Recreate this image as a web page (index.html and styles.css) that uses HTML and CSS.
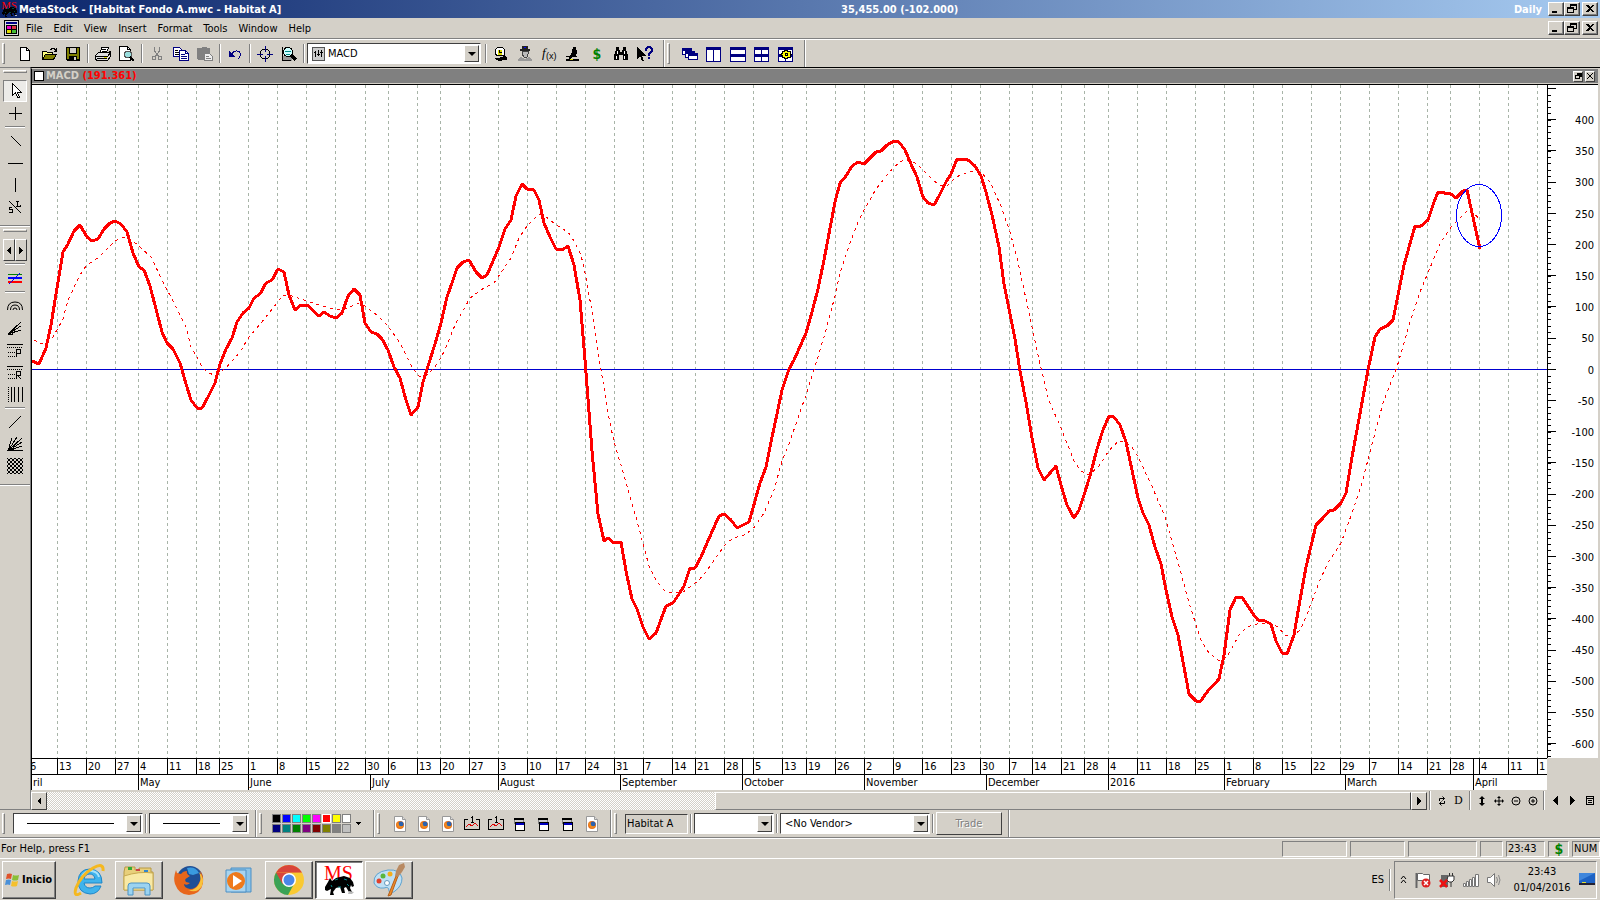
FILE: index.html
```html
<!DOCTYPE html>
<html lang="en">
<head>
  <meta charset="utf-8">
  <meta name="viewport" content="width=device-width, initial-scale=1">
  <title>MetaStock - [Habitat Fondo A.mwc - Habitat A]</title>
  <link rel="stylesheet" href="styles.css">
</head>
<body>

<!-- shared icons -->
<svg class="sprite" width="0" height="0">
  <symbol id="i-bull" viewBox="0 -4 32 34">
    <text x="1" y="13" class="ms-text">MS</text>
    <path d="M2 20l3-5 2-4 2 3 4-3 8-2 6 2 3 4 1 4-2 1-1-2-1 3 2 4h-3l-3-5-2 1 1 5h-3l-2-6-4 1-3 4 1 3h-4l1-6-4 2-2-1z" fill="#000"/>
    <path d="M12 13l3-1M21 12l3 1M15 20l3 0M24 17l2 2M8 18l1 2" stroke="#088" stroke-width="1"/>
    <path d="M26 24l5 1-2 2h-4z" fill="#bbb"/>
  </symbol>
  <symbol id="i-min" viewBox="0 0 12 10"><path d="M2 7h5v2h-5z"/></symbol>
  <symbol id="i-restore" viewBox="0 0 12 10"><path d="M4 0h7v6h-3v3h-7v-6h3zM5 2v1h3v2h2v-3zM2 5v3h5v-3z" fill-rule="evenodd"/></symbol>
  <symbol id="i-close" viewBox="0 0 12 10"><path d="M2 1h2l2 2 2-2h2l-3 3.500 3 3.500h-2l-2-2-2 2h-2l3-3.500z"/></symbol>
  <symbol id="i-ffdoc" viewBox="0 0 16 16">
    <path d="M2.500 .5h8l3 3v12h-11z" fill="#fff" stroke="#999"/><path d="M10.500 .5v3h3" fill="#ddd" stroke="#999"/>
    <circle cx="8" cy="9" r="4" fill="#e8701a"/><circle cx="9" cy="8" r="2.500" fill="#2a62b0"/><path d="M5 6q-1 5 3 6 3 0 4-3-2 2-4 1-2-1-1-2z" fill="#f08a1c"/>
  </symbol>
  <symbol id="i-chartin" viewBox="0 0 16 16"><path d="M4 3.500H.5v10h15v-10H12M8.500 0v7M6.500 1.500h2M7 6.500h3" fill="none" stroke="#000"/><path d="M2 11l3-3 3 2 3-3 3 3" fill="none" stroke="#d00"/></symbol>
  <symbol id="i-win" viewBox="0 0 16 16"><path d="M2 2h10v6H2z" fill="#808080"/><path d="M2 2h10v2H2zM3 6h10v9H3z"/><path d="M3 4h8v2H3z" fill="#ccc"/><path d="M4 7h8v2H4z" fill="#0000c0"/><path d="M4 9h8v5H4z" fill="#fff"/></symbol>
</svg>

<header class="titlebar">
  <div class="titlebar__name">
    <svg class="titlebar__icon" width="17" height="18"><use href="#i-bull"/></svg>
    <h1 class="titlebar__text">MetaStock - [Habitat Fondo A.mwc - Habitat A]</h1>
  </div>
  <div class="titlebar__info">
    <span class="titlebar__text">35,455.00 (-102.000)</span>
    <span class="titlebar__text titlebar__period">Daily</span>
    <div class="winbtns">
      <button class="winbtn" type="button" aria-label="Minimize"><svg width="12" height="10"><use href="#i-min"/></svg></button>
      <button class="winbtn" type="button" aria-label="Restore"><svg width="12" height="10"><use href="#i-restore"/></svg></button>
      <button class="winbtn winbtn_close" type="button" aria-label="Close"><svg width="12" height="10"><use href="#i-close"/></svg></button>
    </div>
  </div>
</header>

<nav class="menubar">
  <svg class="menubar__icon" width="15" height="16" viewBox="0 0 15 16"><path d="M0 0h15v16H0z"/><path d="M1 1h13v14H1z" fill="#ddd"/><path d="M2 2h11v2H2z" fill="#008"/><path d="M2 5h11v9H2z"/><path d="M3 6h4v3H3z" fill="#e0c"/><path d="M8 6h4v3H8z" fill="#d34"/><path d="M3 10h4v3H3z" fill="#dd0"/><path d="M8 10h4v3H8z" fill="#4b3"/></svg>
  <button class="menubar__item" type="button">File</button>
  <button class="menubar__item" type="button">Edit</button>
  <button class="menubar__item" type="button">View</button>
  <button class="menubar__item" type="button">Insert</button>
  <button class="menubar__item" type="button">Format</button>
  <button class="menubar__item" type="button">Tools</button>
  <button class="menubar__item" type="button">Window</button>
  <button class="menubar__item" type="button">Help</button>
  <div class="winbtns">
    <button class="winbtn" type="button" aria-label="Minimize chart"><svg width="12" height="10"><use href="#i-min"/></svg></button>
    <button class="winbtn" type="button" aria-label="Restore chart"><svg width="12" height="10"><use href="#i-restore"/></svg></button>
    <button class="winbtn winbtn_close" type="button" aria-label="Close chart"><svg width="12" height="10"><use href="#i-close"/></svg></button>
  </div>
</nav>

<div class="toolbar" role="toolbar" aria-label="Standard">
  <span class="grip"></span>
  <button class="tool tool_first" type="button" aria-label="New"><svg width="16" height="16" viewBox="0 0 16 16"><path d="M3.500 1.500h6l3 3v10h-9z" fill="#fff" stroke="#000"/><path d="M9.500 1.500v3h3" fill="none" stroke="#000"/></svg></button>
  <button class="tool" type="button" aria-label="Open"><svg width="16" height="16" viewBox="0 0 16 16"><path d="M1.500 13.500v-8h4l1 1h5v3" fill="#ffff80" stroke="#000"/><path d="M1.500 13.500l3-5h11l-3 5z" fill="#808000" stroke="#000"/><path d="M9 3.500h1l1-1h2l2 2M15.500 2v3h-3" fill="none" stroke="#000"/></svg></button>
  <button class="tool" type="button" aria-label="Save"><svg width="16" height="16" viewBox="0 0 16 16"><path d="M1 1h14v14H2l-1-1z"/><path d="M2 2h2v6h8V2h2v11H2z" fill="#808000"/><path d="M5 2h6v5H5z" fill="#d4d0c8"/><path d="M4 10h8v5H4z"/><path d="M9 11h2v3H9z" fill="#d4d0c8"/></svg></button>
  <span class="sep"></span>
  <button class="tool" type="button" aria-label="Print"><svg width="16" height="16" viewBox="0 0 16 16"><path d="M5.500 6.500l1-5h7l-2 5" fill="#fff" stroke="#000"/><path d="M7 3.500h4M7 5.500h4" stroke="#000"/><path d="M.5 9.500l3-3h10l2-1v5l-3 4h-10l-2-1z" fill="#ddd" stroke="#000"/><path d="M1 10.500h12M2 12.500h10M13 10l2-3" stroke="#000"/><path d="M9 11h3v1H9z" fill="#dd0"/></svg></button>
  <button class="tool" type="button" aria-label="Print preview"><svg width="16" height="16" viewBox="0 0 16 16"><path d="M.5 .5h8l3 3v11H.5z" fill="#fff" stroke="#000"/><path d="M8.500 .5v3h3" fill="none" stroke="#000"/><circle cx="9" cy="8.500" r="3.500" fill="#9dd" stroke="#555"/><path d="M11 11l4 4" stroke="#000" stroke-width="2"/></svg></button>
  <span class="sep"></span>
  <button class="tool" type="button" aria-label="Cut"><svg width="16" height="16" viewBox="0 0 16 16"><path d="M5.500 1v4l4 5M10.500 1v4l-4 5" fill="none" stroke="#808080"/><circle cx="5" cy="12" r="2" fill="none" stroke="#808080"/><circle cx="11" cy="12" r="2" fill="none" stroke="#808080"/></svg></button>
  <button class="tool" type="button" aria-label="Copy"><svg width="16" height="16" viewBox="0 0 16 16"><path d="M.5 1.500h6l2 2v7h-8z" fill="#fff" stroke="#000080"/><path d="M2 4.500h3M2 6.500h4M2 8.500h4" stroke="#000"/><path d="M6.500 4.500h6l3 3v7h-9z" fill="#fff" stroke="#000080"/><path d="M12.500 4.500v3h3M8 8.500h4M8 10.500h6M8 12.500h6" fill="none" stroke="#000080"/></svg></button>
  <button class="tool" type="button" aria-label="Paste"><svg width="16" height="16" viewBox="0 0 16 16"><path d="M0 2h4l1-1h4l1 1h3v5H7v7H1l-1-1z" fill="#808080"/><path d="M7.500 7.500h5l3 3v4h-8z" fill="#eee" stroke="#808080"/><path d="M9 10.500h3M9 12.500h5" stroke="#808080"/></svg></button>
  <span class="sep"></span>
  <button class="tool" type="button" aria-label="Undo"><svg width="16" height="16" viewBox="0 0 16 16"><path d="M2 5v6h6z" fill="#000080"/><path d="M5 8c2-4 7-4 8-1 1 2 0 4-2 6" fill="none" stroke="#000080"/></svg></button>
  <span class="sep"></span>
  <button class="tool" type="button" aria-label="Crosshair"><svg width="16" height="16" viewBox="0 0 16 16"><circle cx="8" cy="8" r="5" fill="none" stroke="#000"/><path d="M8 0v6M8 10v6M0 8h6M10 8h6" stroke="#000080"/></svg></button>
  <button class="tool" type="button" aria-label="Zoom"><svg width="16" height="16" viewBox="0 0 16 16"><path d="M1 10h10v5H1z" fill="#999"/><path d="M1.500 1v14M4.500 1v4M1 14.500h9" stroke="#000"/><circle cx="7" cy="6" r="4.500" fill="#cff" stroke="#000"/><path d="M4 5.500h6M5 8.500h4" stroke="#088"/><path d="M10 9l5 5" stroke="#000" stroke-width="3"/></svg></button>
  <span class="sep"></span>
  <div class="combo combo_indicator">
    <svg class="combo__icon" width="13" height="14" viewBox="0 0 13 14"><path d="M.5 .5h12v13H.5z" fill="#ccc" stroke="#555"/><path d="M3.500 4v6M2 5.500h2M6.500 3v6M5 7.500h3M9.500 3v7M8 5.500h3" stroke="#000"/></svg>
    <select class="combo__select" aria-label="Indicator"><option>MACD</option></select>
    <span class="combo__arrow"></span>
  </div>
  <span class="sep"></span>
  <button class="tool" type="button" aria-label="Expert"><svg width="16" height="16" viewBox="0 0 16 16"><path d="M4.500 1.500h5l2 2v6h-7l-2-1v-5z" fill="#fff" stroke="#000"/><path d="M5 4h4v5H5z" fill="#dd0"/><path d="M6.500 4v2h2M5 9.500h6" stroke="#000" fill="none"/><path d="M2 12h3l4-1 2-2 3 2v3h-5v1H6l-4-2z"/></svg></button>
  <button class="tool" type="button" aria-label="Advisor"><svg width="16" height="16" viewBox="0 0 16 16"><path d="M5 0h6v3h2v2H3V3h2z" fill="#222"/><path d="M7 1h2v1H7z" fill="#00f"/><path d="M5 5h6v3l-1 3H7L5 8z" fill="#bbb" stroke="#444"/><path d="M1 15v-2l3-2 4 2 4-2 3 2v2z" fill="#999"/></svg></button>
  <button class="tool" type="button" aria-label="Functions"><svg width="16" height="16" viewBox="0 0 16 16"><text x="1" y="11" class="fx-text">f</text><text x="5" y="13" class="fx-sub">(x)</text></svg></button>
  <button class="tool" type="button" aria-label="Explorer"><svg width="16" height="16" viewBox="0 0 16 16"><path d="M8 1h3v3h1v4h-1l1 3H8l-3 2h9v2H1v-2h3l1-3 2-4z"/><path d="M1 10h5v1H1z"/><path d="M5 13h3v1H5z" fill="#dd0"/></svg></button>
  <button class="tool tool_dollar" type="button">$</button>
  <button class="tool" type="button" aria-label="Find"><svg width="16" height="16" viewBox="0 0 16 16"><path d="M3 1h3v3h1v2h2V4h1V1h3v3l2 5v5h-5V9H6v5H1V9l2-5z"/><path d="M4 5v3M3 10v3M11 5v3M11 10v3" stroke="#fff"/></svg></button>
  <button class="tool" type="button" aria-label="Help pointer"><svg width="18" height="16" viewBox="0 0 18 16"><path d="M1 1v12l3-3 2 5h2l-2-5h4z"/><path d="M10 5V3l2-2h2l2 2v2l-3 3v2" fill="none" stroke="#000080" stroke-width="2"/><path d="M12 11h2v2h-2z" fill="#000080"/></svg></button>
  <span class="toolbar__end"></span>
  <span class="grip"></span>
  <button class="tool tool_first" type="button" aria-label="Cascade"><svg width="16" height="16" viewBox="0 0 16 16"><path d="M0 2h10v7H0z" fill="#000080"/><path d="M1 5h8v3H1z" fill="#fff"/><path d="M3 5h10v7H3z" fill="#000080"/><path d="M4 8h8v3H4z" fill="#fff"/><path d="M6 7h10v7H6z" fill="#000080"/><path d="M7 10h8v3H7z" fill="#fff"/></svg></button>
  <button class="tool" type="button" aria-label="Tile columns"><svg width="16" height="16" viewBox="0 0 16 16"><path d="M0 1h15v15H0z" fill="#000080"/><path d="M1 4h6v11H1zM8 4h6v11H8z" fill="#fff"/></svg></button>
  <button class="tool" type="button" aria-label="Tile rows"><svg width="16" height="16" viewBox="0 0 16 16"><path d="M0 1h16v15H0z" fill="#000080"/><path d="M1 4h14v4H1zM1 11h14v4H1z" fill="#fff"/></svg></button>
  <button class="tool" type="button" aria-label="Tile grid"><svg width="16" height="16" viewBox="0 0 16 16"><path d="M0 1h15v15H0z" fill="#000080"/><path d="M1 4h6v4H1zM8 4h6v4H8zM1 11h6v4H1zM8 11h6v4H8z" fill="#fff"/></svg></button>
  <button class="tool" type="button" aria-label="Layout options"><svg width="16" height="16" viewBox="0 0 16 16"><path d="M0 1h15v15H0z" fill="#000080"/><path d="M1 4h6v4H1zM8 4h6v4H8zM1 11h6v4H1zM8 11h6v4H8z" fill="#fff"/><path d="M7 4.500h2l1 1h2v2l1 1-1 1v2h-2l-1 1H7l-1-1H4v-2l-1-1 1-1v-2h2z" fill="#ff0" stroke="#000"/><path d="M7 7.500h2v2H7z" fill="none" stroke="#000"/></svg></button>
  <span class="toolbar__end"></span>
</div>

<main class="workspace">
  <div class="drawbar" role="toolbar" aria-label="Drawing">
    <span class="drawbar__grip"></span>
    <button class="draw draw_active" type="button" aria-label="Select"><svg width="16" height="18" viewBox="0 0 16 18"><path d="M5.500 1.500v12l3-3 2 5h2l-2-5h4z" fill="#fff" stroke="#000"/></svg></button>
    <button class="draw" type="button" aria-label="Cross"><svg width="16" height="16" viewBox="0 0 16 16"><path d="M8.500 2v13M2 8.500h13" stroke="#000"/></svg></button>
    <span class="drawbar__sep"></span>
    <button class="draw" type="button" aria-label="Trendline"><svg width="16" height="16" viewBox="0 0 16 16"><path d="M4 3l10 10" stroke="#000"/></svg></button>
    <button class="draw" type="button" aria-label="Horizontal line"><svg width="16" height="16" viewBox="0 0 16 16"><path d="M1 8.500h15" stroke="#000"/></svg></button>
    <button class="draw" type="button" aria-label="Vertical line"><svg width="16" height="16" viewBox="0 0 16 16"><path d="M8.500 1v14" stroke="#000"/></svg></button>
    <button class="draw" type="button" aria-label="Stop loss"><svg width="16" height="16" viewBox="0 0 16 16"><path d="M2 2l12 12" stroke="#000"/><path d="M10.500 2v6M9 2.500h3M9 7.500h4v-2M5 8.500H2.500v2h3v3H2" fill="none" stroke="#000"/></svg></button>
    <span class="drawbar__rule"></span>
    <span class="drawbar__grip"></span>
    <div class="drawbar__pager">
      <button class="pager" type="button" aria-label="Previous tools"><svg width="4" height="7" viewBox="0 0 4 7"><path d="M4 0v7L0 3.500z"/></svg></button>
      <button class="pager" type="button" aria-label="Next tools"><svg width="4" height="7" viewBox="0 0 4 7"><path d="M0 0v7l4-3.500z"/></svg></button>
    </div>
    <span class="drawbar__sep"></span>
    <button class="draw" type="button" aria-label="Line style"><svg width="16" height="16" viewBox="0 0 16 16"><path d="M1 4.500h14" stroke="#008000"/><path d="M1 8h14" stroke="#00f" stroke-width="2"/><path d="M1 12h14" stroke="#f00" stroke-width="2"/><path d="M2 14L13 3" stroke="#00f"/></svg></button>
    <span class="drawbar__sep"></span>
    <button class="draw" type="button" aria-label="Fibonacci arcs"><svg class="smooth" width="16" height="16" viewBox="0 0 16 16"><path d="M.5 12q0-8 7.500-8t7.500 8M3.500 12q0-5 4.500-5t4.500 5M6 12q0-2 2-2t2 2" fill="none" stroke="#000"/></svg></button>
    <button class="draw" type="button" aria-label="Fibonacci fan"><svg width="16" height="16" viewBox="0 0 16 16"><path d="M1 14L14 2M1 14l13-8M1 14l13-4M1 14h4v-3" fill="none" stroke="#000"/></svg></button>
    <button class="draw" type="button" aria-label="Projection"><svg width="16" height="16" viewBox="0 0 16 16"><path d="M0 2.500h16M9.500 15V7H13v4h-3" fill="none" stroke="#000"/><path d="M0 5.500h16M1 10.500h7M1 14.500h7" stroke="#000" stroke-dasharray="1 1"/></svg></button>
    <button class="draw" type="button" aria-label="Retracement"><svg width="16" height="16" viewBox="0 0 16 16"><path d="M0 2.500h16M9.500 15V7H13v4h-3l4 4" fill="none" stroke="#000"/><path d="M0 5.500h16M1 10.500h7M1 14.500h7" stroke="#000" stroke-dasharray="1 1"/></svg></button>
    <button class="draw" type="button" aria-label="Time zones"><svg width="16" height="16" viewBox="0 0 16 16"><path d="M1.500 1v15" stroke="#000" stroke-dasharray="1 1"/><path d="M4.500 1v15M7.500 1v15M11.500 1v15M15.500 1v15" stroke="#000"/></svg></button>
    <span class="drawbar__sep"></span>
    <button class="draw" type="button" aria-label="Gann line"><svg width="16" height="16" viewBox="0 0 16 16"><path d="M2 14L14 2" stroke="#000"/></svg></button>
    <button class="draw" type="button" aria-label="Gann fan"><svg width="16" height="16" viewBox="0 0 16 16"><path d="M1 15L5 2M1 15L10 1M1 15L15 2M1 15l14-9M1 15l14-5M0 14.500h16" fill="none" stroke="#000"/></svg></button>
    <button class="draw" type="button" aria-label="Gann grid"><svg class="smooth" width="16" height="16" viewBox="0 0 16 16"><path d="M0 4l4-4M0 8l8-8M0 12L12 0M0 16L16 0M4 16L16 4M8 16l8-8M12 16l4-4M12 0l4 4M8 0l8 8M4 0l12 12M0 0l16 16M0 4l12 12M0 8l8 8M0 12l4 4" stroke="#000"/></svg></button>
    <span class="drawbar__rule"></span>
  </div>

  <div class="chart">
    <div class="caption">
      <span class="caption__box"></span>
      <h2 class="caption__name">MACD <span class="caption__value">(191.361)</span></h2>
      <button class="caption__btn" type="button" aria-label="Restore pane"><svg width="7" height="6" viewBox="0 0 7 6"><path d="M2 0h5v4H5v2H0V2h2zM1 3v2h3V3z" fill-rule="evenodd"/></svg></button>
      <button class="caption__btn" type="button" aria-label="Close pane"><svg width="6" height="6" viewBox="0 0 6 6"><path d="M0 0l6 6M6 0L0 6" stroke="#000"/></svg></button>
    </div>

    <div class="pane">
      <svg class="plot" viewBox="32 85 1515 673" preserveAspectRatio="none">
        <path class="plot__grid" d="M57.500 85V758M86.500 85V758M115.500 85V758M138.500 85V758M167.500 85V758M196.500 85V758M219.500 85V758M248.500 85V758M277.500 85V758M306.500 85V758M335.500 85V758M365.500 85V758M388.500 85V758M417.500 85V758M440.500 85V758M469.500 85V758M498.500 85V758M527.500 85V758M556.500 85V758M585.500 85V758M614.500 85V758M643.500 85V758M672.500 85V758M695.500 85V758M724.500 85V758M753.500 85V758M782.500 85V758M806.500 85V758M835.500 85V758M864.500 85V758M893.500 85V758M922.500 85V758M951.500 85V758M980.500 85V758M1009.500 85V758M1032.500 85V758M1061.500 85V758M1084.500 85V758M1108.500 85V758M1137.500 85V758M1166.500 85V758M1195.500 85V758M1224.500 85V758M1253.500 85V758M1282.500 85V758M1311.500 85V758M1340.500 85V758M1369.500 85V758M1398.500 85V758M1427.500 85V758M1450.500 85V758M1479.500 85V758M1508.500 85V758M1537.500 85V758"/>
        <path class="plot__zero" d="M32 369.500H1547"/>
        <polyline class="plot__signal" points="34,340 40,343 46,343 52,339 58,328 63,319 68,300 80,275 86,266 99,257 115,241 122,237 129,238 139,246 151,257 162,280 174,303 186,327 191,347 197,357 202,367 208,373 215,375 226,368 240,352 249,337 261,323 273,308 283,295 289,295 301,299 319,305 337,310 348,308 359,303 365,306 377,315 388,326 400,343 412,367 419,376 426,376 435,367 444,352 455,325 470,298 484,288 494,283 511,258 519,238 527,226 539,214 545,216 556,225 568,232 574,241 581,255 586,277 592,312 600,364 608,413 614,442 626,482 637,521 649,566 656,580 664,590 671,593 683,592 698,581 706,572 715,559 725,545 733,538 744,535 753,529 764,513 774,490 782,461 789,444 806,395 814,370 826,330 835,296 840,273 849,246 858,222 864,210 876,189 887,175 894,167 903,160 912,161 919,166 930,177 939,185 948,185 956,177 971,171 981,172 990,182 1001,206 1010,232 1017,258 1026,299 1040,364 1049,401 1061,428 1074,461 1081,471 1089,475 1099,466 1108,452 1113,446 1119,441 1124,441 1132,447 1138,457 1151,484 1165,517 1178,562 1189,603 1201,640 1209,653 1219,661 1227,657 1239,635 1247,627 1260,623 1271,623 1278,627 1285,635 1291,637 1300,630 1306,617 1320,580 1329,561 1341,543 1352,513 1362,483 1371,448 1383,403 1397,367 1410,322 1420,292 1430,268 1440,244 1451,227 1462,216 1468,210 1474,214 1480,219"/>
        <polyline class="plot__macd" points="32,361 39,364 46,348 51,325 57,288 63,252 68,244 74,231 80,225 87,237 92,241 98,239 104,229 110,223 115,221 121,224 127,232 133,253 139,267 144,270 150,286 162,332 167,343 173,349 180,363 186,384 191,400 197,408 202,408 208,397 215,383 220,364 226,349 232,338 237,322 243,313 249,308 254,298 260,294 266,283 272,280 278,269 284,272 289,295 295,310 301,305 307,305 319,316 324,312 330,316 336,318 342,313 348,296 354,289 360,295 365,323 371,332 377,334 382,339 388,350 394,367 400,378 406,400 411,415 418,407 423,382 435,344 441,323 447,297 452,283 457,268 463,262 469,260 476,272 482,278 487,275 493,261 499,247 505,229 511,220 516,196 522,184 527,189 534,190 539,200 544,223 550,237 556,249 562,250 568,246 574,265 580,300 585,360 592,451 598,514 604,541 608,538 614,543 621,542 626,571 632,599 637,609 643,627 649,639 656,633 666,606 673,603 679,594 684,586 690,568 695,568 701,557 707,543 719,516 724,514 731,520 737,528 749,522 753,508 760,483 766,467 771,442 777,414 782,390 789,369 794,360 806,333 812,312 818,289 824,260 835,202 840,183 846,176 852,166 858,162 864,164 876,152 881,151 887,145 894,141 899,142 905,150 911,164 917,177 923,197 928,203 934,205 939,196 946,182 951,174 957,159 968,160 975,166 981,176 986,192 992,215 999,247 1004,284 1015,339 1020,371 1026,402 1032,438 1038,468 1044,480 1056,466 1061,485 1067,505 1074,518 1079,510 1084,495 1090,476 1097,449 1103,430 1109,416 1114,417 1120,425 1126,442 1132,470 1138,498 1143,513 1149,525 1155,547 1161,564 1166,590 1172,617 1178,635 1184,667 1189,694 1196,701 1200,702 1207,692 1219,679 1224,655 1230,610 1236,597 1242,597 1253,614 1258,620 1265,621 1271,624 1276,641 1282,653 1287,654 1294,635 1300,600 1306,567 1316,525 1322,519 1329,511 1334,510 1341,503 1346,493 1352,457 1368,370 1375,337 1380,329 1387,326 1393,320 1404,265 1415,226 1421,226 1428,220 1434,202 1438,192 1451,194 1456,198 1463,191 1467,190 1480,249"/>
        <ellipse class="plot__mark" cx="1479" cy="215.500" rx="22.500" ry="31"/>
      </svg>
      <div class="yaxis">
        <svg class="yaxis__ticks" viewBox="0 85 9 673" preserveAspectRatio="none">
          <path class="yaxis__minor" d="M1.500 94.700V758"/>
          <path class="yaxis__major" d="M4 88V758"/>
        </svg>
        <ol class="yaxis__labels">
          <li>400</li><li>350</li><li>300</li><li>250</li><li>200</li><li>150</li><li>100</li><li>50</li><li>0</li><li>-50</li><li>-100</li><li>-150</li><li>-200</li><li>-250</li><li>-300</li><li>-350</li><li>-400</li><li>-450</li><li>-500</li><li>-550</li><li>-600</li>
        </ol>
      </div>
      <div class="dates">
        <div class="weeks">
          <span class="cut">6</span><span>13</span><span>20</span><span>27</span><span>4</span><span>11</span><span>18</span><span>25</span><span>1</span><span>8</span><span>15</span><span>22</span><span>30</span><span>6</span><span>13</span><span>20</span><span>27</span><span>3</span><span>10</span><span>17</span><span>24</span><span>31</span><span>7</span><span>14</span><span>21</span><span>28</span><span></span><span>5</span><span>13</span><span>19</span><span>26</span><span>2</span><span>9</span><span>16</span><span>23</span><span>30</span><span>7</span><span>14</span><span>21</span><span>28</span><span>4</span><span>11</span><span>18</span><span>25</span><span>1</span><span>8</span><span>15</span><span>22</span><span>29</span><span>7</span><span>14</span><span>21</span><span>28</span><span></span><span>4</span><span>11</span><span>1</span>
        </div>
        <div class="months">
          <span>ril</span><span>May</span><span>June</span><span>July</span><span>August</span><span>September</span><span>October</span><span>November</span><span>December</span><span>2016</span><span>February</span><span>March</span><span>April</span>
        </div>
      </div>
    </div>

    <div class="scroller">
      <button class="scroller__btn" type="button" aria-label="Scroll left"><svg width="4" height="8" viewBox="0 0 4 8"><path d="M4 0v8L0 4z"/></svg></button>
      <div class="scroller__track"><div class="scroller__thumb"></div></div>
      <button class="scroller__btn" type="button" aria-label="Scroll right"><svg width="4" height="8" viewBox="0 0 4 8"><path d="M0 0v8l4-4z"/></svg></button>
      <span class="sep"></span>
      <button class="mini" type="button" aria-label="Refresh"><svg class="smooth" width="8" height="10" viewBox="0 0 8 10"><path d="M1.500 5V2.500h5M4.500 .5l2 2-2 2M6.500 5v2.500h-5M3.500 5.500l-2 2 2 2" fill="none" stroke="#000"/></svg></button>
      <button class="mini mini_text" type="button">D</button>
      <span class="sep"></span>
      <button class="mini" type="button" aria-label="Rescale"><svg class="smooth" width="8" height="10" viewBox="0 0 8 10"><path d="M4 0l3 3H5v4h2l-3 3-3-3h2V3H1z"/></svg></button>
      <button class="mini" type="button" aria-label="Move"><svg class="smooth" width="10" height="10" viewBox="0 0 10 10"><path d="M5 0l2 2H5.500v2.500H8V3l2 2-2 2V5.500H5.500V8H7l-2 2-2-2h1.500V5.500H2V7L0 5l2-2v1.500h2.500V2H3z"/></svg></button>
      <button class="mini" type="button" aria-label="Zoom out"><svg class="smooth" width="10" height="10" viewBox="0 0 10 10"><circle cx="5" cy="5" r="4" fill="none" stroke="#000"/><path d="M3 5h4" stroke="#000"/></svg></button>
      <button class="mini" type="button" aria-label="Zoom in"><svg class="smooth" width="10" height="10" viewBox="0 0 10 10"><circle cx="5" cy="5" r="4" fill="none" stroke="#000"/><path d="M3 5h4M5 3v4" stroke="#000"/></svg></button>
      <span class="sep"></span>
      <button class="mini" type="button" aria-label="Previous security"><svg width="5" height="9" viewBox="0 0 5 9"><path d="M5 0v9L0 4.500z"/></svg></button>
      <button class="mini" type="button" aria-label="Next security"><svg width="5" height="9" viewBox="0 0 5 9"><path d="M0 0v9l5-4.500z"/></svg></button>
      <button class="mini" type="button" aria-label="Choose security"><svg width="8" height="9" viewBox="0 0 8 9"><path d="M.5 .5h7v8h-7zM0 2.500h8M2 4.500h4M2 6.500h4" fill="none" stroke="#000"/></svg></button>
    </div>
  </div>
</main>

<div class="toolbar toolbar_bottom" role="toolbar" aria-label="Formatting">
  <span class="grip"></span>
  <div class="combo combo_style">
    <select class="combo__select combo__select_line" aria-label="Line style"><option></option></select>
    <span class="combo__arrow"></span>
  </div>
  <span class="sep"></span>
  <div class="combo combo_weight">
    <select class="combo__select combo__select_line" aria-label="Line weight"><option></option></select>
    <span class="combo__arrow"></span>
  </div>
  <span class="toolbar__end"></span>
  <span class="grip"></span>
  <div class="palette">
    <button class="swatch swatch_black" type="button" aria-label="Black"></button>
    <button class="swatch swatch_blue" type="button" aria-label="Blue"></button>
    <button class="swatch swatch_cyan" type="button" aria-label="Cyan"></button>
    <button class="swatch swatch_lime" type="button" aria-label="Lime"></button>
    <button class="swatch swatch_magenta" type="button" aria-label="Magenta"></button>
    <button class="swatch swatch_red" type="button" aria-label="Red"></button>
    <button class="swatch swatch_yellow" type="button" aria-label="Yellow"></button>
    <button class="swatch swatch_white" type="button" aria-label="White"></button>
    <button class="swatch swatch_navy" type="button" aria-label="Navy"></button>
    <button class="swatch swatch_teal" type="button" aria-label="Teal"></button>
    <button class="swatch swatch_green" type="button" aria-label="Green"></button>
    <button class="swatch swatch_purple" type="button" aria-label="Purple"></button>
    <button class="swatch swatch_maroon" type="button" aria-label="Maroon"></button>
    <button class="swatch swatch_olive" type="button" aria-label="Olive"></button>
    <button class="swatch swatch_gray" type="button" aria-label="Gray"></button>
    <button class="swatch swatch_silver" type="button" aria-label="Silver"></button>
  </div>
  <button class="palette__more" type="button" aria-label="More colours"><svg width="5" height="3" viewBox="0 0 5 3"><path d="M0 0h5L2.500 3z"/></svg></button>
  <span class="toolbar__end"></span>
  <span class="grip"></span>
  <button class="tool tool_first" type="button" aria-label="Page 1"><svg class="smooth" width="16" height="16"><use href="#i-ffdoc"/></svg></button>
  <button class="tool" type="button" aria-label="Page 2"><svg class="smooth" width="16" height="16"><use href="#i-ffdoc"/></svg></button>
  <button class="tool" type="button" aria-label="Page 3"><svg class="smooth" width="16" height="16"><use href="#i-ffdoc"/></svg></button>
  <button class="tool" type="button" aria-label="Insert chart"><svg width="16" height="16"><use href="#i-chartin"/></svg></button>
  <button class="tool" type="button" aria-label="Export chart"><svg width="16" height="16"><use href="#i-chartin"/></svg></button>
  <button class="tool" type="button" aria-label="Window 1"><svg width="16" height="16"><use href="#i-win"/></svg></button>
  <button class="tool" type="button" aria-label="Window 2"><svg width="16" height="16"><use href="#i-win"/></svg></button>
  <button class="tool" type="button" aria-label="Window 3"><svg width="16" height="16"><use href="#i-win"/></svg></button>
  <button class="tool" type="button" aria-label="Page 4"><svg class="smooth" width="16" height="16"><use href="#i-ffdoc"/></svg></button>
  <span class="toolbar__end"></span>
  <span class="grip"></span>
  <input class="symbol" type="text" value="Habitat A" aria-label="Security" readonly>
  <span class="sep"></span>
  <div class="combo combo_short">
    <select class="combo__select" aria-label="Account"><option></option></select>
    <span class="combo__arrow"></span>
  </div>
  <span class="sep"></span>
  <div class="combo combo_vendor">
    <select class="combo__select" aria-label="Vendor"><option>&lt;No Vendor&gt;</option></select>
    <span class="combo__arrow"></span>
  </div>
  <span class="sep"></span>
  <button class="trade" type="button" disabled>Trade</button>
  <span class="toolbar__end"></span>
</div>

<div class="status">
  <span class="status__help">For Help, press F1</span>
  <span class="status__pane status__pane_a"></span>
  <span class="status__pane status__pane_b"></span>
  <span class="status__pane status__pane_c"></span>
  <span class="status__pane status__pane_d"></span>
  <span class="status__pane status__pane_time">23:43</span>
  <span class="status__pane status__pane_dollar">$</span>
  <span class="status__pane status__pane_num">NUM</span>
</div>

<footer class="taskbar">
  <button class="start" type="button">
    <svg width="15" height="15" viewBox="0 0 15 15"><path d="M2 2q3-1 5 0L6 7Q4 6 1 7z" fill="#e0522a"/><path d="M8 3q3 1 6 0l-1 5q-3 1-6 0z" fill="#8abf35"/><path d="M1 8q3-1 5 0l-1 5q-2-1-5 0z" fill="#4a90d8"/><path d="M7 9q3 1 6 0l-1 5q-3 1-6 0z" fill="#f5c02c"/></svg>
    Inicio
  </button>
  <button class="task task_first" type="button" aria-label="Internet Explorer">
    <svg width="32" height="32" viewBox="0 0 32 32"><path d="M29 19H11q1 5 6 5 3 0 5-2h6q-3 8-11 8-12-1-12-13Q6 5 17 5q12 1 12 14zM11 15h11q-1-5-5-5-5 0-6 5z" fill="#3fb3ec" stroke="#1e86c8"/><path d="M9 12q4-6 10-5 6 1 7 6" fill="none" stroke="#a5e2fb" stroke-width="2"/><path d="M8 29Q0 34 3 24 8 11 20 4q11-6 10 3" fill="none" stroke="#f5b81f" stroke-width="3"/></svg>
  </button>
  <button class="task task_raised" type="button" aria-label="File Explorer">
    <svg width="34" height="32" viewBox="0 0 34 32"><path d="M3 3h10v3h4V4h12v4h2v18H2V8z" fill="#e8cf7a" stroke="#b89a45"/><path d="M2 12q15-5 29-3v17H2z" fill="#f8e9a5" stroke="#c8aa50"/><path d="M6 3h4v3H6z" fill="#3a3"/><path d="M14 5h4v2h-4z" fill="#c44"/><path d="M22 6h4v2h-4z" fill="#38c"/><path d="M6 31V22q0-3 3-3h16q3 0 3 3v9h-5v-7H11v7z" fill="#9bd3f0" stroke="#4c93c4"/></svg>
  </button>
  <button class="task" type="button" aria-label="Firefox">
    <svg width="32" height="32" viewBox="0 0 32 32"><circle cx="17" cy="15" r="13" fill="#1f4f96"/><path d="M14 4q8-2 12 5l-6 2-4-1z" fill="#3a9be0"/><path d="M3 6Q0 14 2 20q4 11 14 11 12-1 14-12 1-8-3-12 2 7-1 12-3 6-9 6-6-1-6-5 3 2 6-1l-4-1q-2-3 1-4l3-2q-4-2-3-5-4 0-6 3L4 9z" fill="#e8661b"/><path d="M26 8q3 7 0 12-4 7-11 6 9 4 14-4 3-8-3-14z" fill="#f9c23c"/></svg>
  </button>
  <button class="task" type="button" aria-label="Media Player">
    <svg width="32" height="32" viewBox="0 0 32 32"><path d="M8 4h20v24H8z" fill="#8cc4e8" stroke="#4d8fc4"/><path d="M3 6h20v22H3z" fill="#a8d4ef" stroke="#4d8fc4"/><circle cx="13" cy="17" r="9" fill="#ee7a1c"/><path d="M10 11l9 6-9 6z" fill="#fff"/></svg>
  </button>
  <button class="task task_raised" type="button" aria-label="Chrome">
    <svg width="32" height="32" viewBox="0 0 32 32"><circle cx="16" cy="16" r="15" fill="#f9c932"/><path d="M3 8.500A15 15 0 0 1 29 8.500H16z" fill="#d9453a"/><path d="M3 8.500A15 15 0 0 0 15 31l6-11-5-4z" fill="#3ba256"/><path d="M3 8.500L9.500 20 16 9h13z" fill="#d9453a"/><circle cx="16" cy="16" r="7" fill="#fff"/><circle cx="16" cy="16" r="5.500" fill="#4a86e8"/></svg>
  </button>
  <button class="task task_active" type="button" aria-label="MetaStock">
    <svg width="34" height="34"><use href="#i-bull"/></svg>
  </button>
  <button class="task task_raised" type="button" aria-label="Paint">
    <svg width="34" height="34" viewBox="0 0 34 34"><path d="M16 7Q28 6 30 15q0 8-7 13-5 4-6 0 0-5-5-3-7 1-10-5Q1 9 16 7z" fill="#bfe0f4" stroke="#5fa3cf"/><circle cx="7" cy="18" r="2.500" fill="#e2412c"/><circle cx="11" cy="13" r="2.500" fill="#59b63c"/><circle cx="18" cy="11" r="2.500" fill="#f5ae1c"/><circle cx="15" cy="20" r="2.500" fill="#fff" stroke="#69b"/><path d="M16 33l8-20h2l-7 19z" fill="#ef8b2a" stroke="#b4601a"/><path d="M23 13l1-5 3-6 5-2 1 4-3 5-4 5z" fill="#b98a62"/></svg>
  </button>
  <div class="lang">ES</div>
  <span class="taskbar__split"></span>
  <div class="tray">
    <button class="tray__btn" type="button" aria-label="Show hidden icons"><svg width="7" height="9" viewBox="0 0 7 9"><path d="M1 4l2.500-3L6 4M1 8l2.500-3L6 8" fill="none" stroke="#000"/></svg></button>
    <button class="tray__btn" type="button" aria-label="Action center"><svg width="16" height="16" viewBox="0 0 16 16"><path d="M1.500 1v15" stroke="#666" stroke-width="2"/><path d="M2.500 1.500h5l1 1h6v7h-6l-1-1h-5z" fill="#fff" stroke="#666"/><circle cx="11" cy="11" r="4.500" fill="#d22"/><path d="M9 9l4 4M13 9l-4 4" stroke="#fff" stroke-width="1.500"/></svg></button>
    <button class="tray__btn" type="button" aria-label="Power"><svg width="16" height="16" viewBox="0 0 16 16"><path d="M2 3h7v12H2z" fill="#666"/><path d="M9 4h6v4l-2 2h-3L8 8z" fill="#fff" stroke="#333"/><path d="M10.500 1v3M13.500 1v3M12 10v5" stroke="#333"/><path d="M1 8l7 7M8 8l-7 7" stroke="#e11" stroke-width="2.500"/></svg></button>
    <button class="tray__btn" type="button" aria-label="Network"><svg width="16" height="14" viewBox="0 0 16 14"><path d="M.5 10.500h2v3h-2zM3.500 8.500h2v5h-2zM6.500 6.500h2v7h-2zM9.500 4.500h2v9h-2zM12.500 1.500h3v12h-3z" fill="#fff" stroke="#777"/></svg></button>
    <button class="tray__btn" type="button" aria-label="Volume"><svg width="14" height="16" viewBox="0 0 14 16"><path d="M.5 5.500h3l4-4v13l-4-4h-3z" fill="#fff" stroke="#777"/><path d="M9.500 5q2 3 0 6M11.500 3q3 5 0 10" fill="none" stroke="#888"/></svg></button>
    <div class="clock"><time>23:43</time><span>01/04/2016</span></div>
    <button class="tray__btn" type="button" aria-label="Show desktop"><svg width="16" height="13" viewBox="0 0 16 13"><path d="M0 0h16v11H0z" fill="#1d62c4"/><path d="M0 0h16L0 8z" fill="#3f86dc"/><path d="M0 10h16v2H0z" fill="#223"/><path d="M3 9h4v1H3z" fill="#dd3"/></svg></button>
  </div>
</footer>

</body>
</html>
```
FILE: styles.css
```css
* {
  box-sizing: border-box;
}
body {
  display: flex;
  flex-direction: column;
  height: 100vh;
  margin: 0;
  overflow: hidden;
  background: #d4d0c8;
  color: #000;
  font: 11px/14px "DejaVu Sans Condensed", "DejaVu Sans", sans-serif;
}
button,
input,
select {
  margin: 0;
  padding: 0;
  border: 0;
  border-radius: 0;
  background: none;
  color: #000;
  font: inherit;
}
svg {
  display: block;
  flex-shrink: 0;
  shape-rendering: crispEdges;
}
.smooth {
  shape-rendering: auto;
}
.sprite {
  position: absolute;
}
.ms-text {
  font: 20px "Liberation Serif", serif;
  fill: #f00;
}

/* title bar */
.titlebar {
  display: grid;
  grid-template-columns: 841fr 759fr;
  height: 18px;
  flex-shrink: 0;
  background: linear-gradient(to right, #0a246a, #a6caf0);
}
.titlebar__name,
.titlebar__info {
  display: flex;
  align-items: center;
  min-width: 0;
}
.titlebar__icon {
  margin: 0 1px;
}
.titlebar__text {
  margin: 0;
  padding-top: 2px;
  color: #fff;
  font-size: 11px;
  font-weight: bold;
  white-space: nowrap;
}
.titlebar__period {
  margin-left: auto;
}
.winbtns {
  display: flex;
  margin-left: auto;
  padding-right: 2px;
}
.titlebar__info .winbtns {
  margin-left: 6px;
}
.winbtn {
  display: flex;
  align-items: center;
  justify-content: center;
  width: 16px;
  height: 14px;
  background: #d4d0c8;
  border: 1px solid;
  border-color: #fff #404040 #404040 #fff;
  box-shadow: inset -1px -1px #808080;
}
.winbtn_close {
  margin-left: 2px;
}

/* menu */
.menubar {
  display: flex;
  align-items: center;
  height: 21px;
  flex-shrink: 0;
  padding-left: 4px;
  border-bottom: 1px solid #808080;
}
.menubar__icon {
  margin-right: 1px;
}
.menubar__item {
  padding: 1px 5px 0 6px;
}

/* toolbars */
.toolbar {
  display: flex;
  align-items: center;
  height: 28px;
  flex-shrink: 0;
  border-top: 1px solid #fff;
}
.grip {
  width: 3px;
  height: 21px;
  margin-left: 2px;
  border: 1px solid;
  border-color: #fff #808080 #808080 #fff;
}
.sep {
  width: 2px;
  height: 19px;
  margin: 0 2px;
  flex-shrink: 0;
  border-left: 1px solid #808080;
  border-right: 1px solid #fff;
}
.toolbar__end {
  align-self: stretch;
  width: 2px;
  margin-left: 6px;
  border-left: 1px solid #808080;
  border-right: 1px solid #fff;
}
.tool {
  display: flex;
  align-items: center;
  justify-content: center;
  width: 24px;
  height: 22px;
  flex-shrink: 0;
}
.tool_first {
  margin-left: 8px;
}
.tool_dollar {
  color: #008000;
  font-size: 14px;
  font-weight: bold;
}
.fx-text {
  font: italic 13px "Liberation Serif", serif;
}
.fx-sub {
  font: 9px "Liberation Sans", sans-serif;
}
.combo {
  display: flex;
  align-items: center;
  height: 21px;
  padding: 1px;
  flex-shrink: 0;
  background: #fff;
  border: 1px solid;
  border-color: #404040 #fff #fff #404040;
}
.combo_indicator {
  width: 174px;
  margin-right: 2px;
}
.combo_style {
  width: 130px;
  margin-left: 8px;
}
.combo_weight {
  width: 100px;
}
.combo_short {
  width: 80px;
}
.combo_vendor {
  width: 150px;
}
.combo__icon {
  margin-left: 3px;
}
.combo__select {
  flex: 1;
  min-width: 0;
  height: 17px;
  padding-left: 3px;
  appearance: none;
}
.combo__select_line {
  margin: 0 12px;
  background: linear-gradient(#000, #000) center / 100% 1px no-repeat;
}
.combo__arrow {
  display: flex;
  align-items: center;
  justify-content: center;
  width: 15px;
  height: 17px;
  background: #d4d0c8;
  border: 1px solid;
  border-color: #fff #404040 #404040 #fff;
  pointer-events: none;
}
.combo__arrow::after {
  content: "";
  border: 4px solid transparent;
  border-top-color: #000;
  border-bottom: 0;
}

/* workspace */
.workspace {
  display: flex;
  flex: 1;
  min-height: 0;
}
.drawbar {
  display: flex;
  flex-direction: column;
  align-items: center;
  width: 30px;
  flex-shrink: 0;
  border-top: 1px solid #808080;
  border-bottom: 1px solid #808080;
}
.drawbar__grip {
  width: 24px;
  height: 3px;
  margin: 2px 0 7px;
  flex-shrink: 0;
  border: 1px solid;
  border-color: #fff #808080 #808080 #fff;
}
.drawbar__sep {
  width: 20px;
  height: 2px;
  margin: 2px 0;
  flex-shrink: 0;
  border-top: 1px solid #808080;
  border-bottom: 1px solid #fff;
}
.drawbar__rule {
  width: 100%;
  height: 2px;
  margin-top: 7px;
  flex-shrink: 0;
  border-top: 1px solid #808080;
  border-bottom: 1px solid #fff;
}
.draw {
  display: flex;
  align-items: center;
  justify-content: center;
  width: 24px;
  height: 22px;
  flex-shrink: 0;
}
.draw_active {
  background: #ecebe8;
  border: 1px solid;
  border-color: #808080 #fff #fff #808080;
}
.drawbar__pager {
  display: flex;
}
.pager {
  display: flex;
  align-items: center;
  justify-content: center;
  width: 12px;
  height: 22px;
  border: 1px solid;
  border-color: #fff #404040 #404040 #fff;
}
.chart {
  display: flex;
  flex: 1;
  flex-direction: column;
  min-width: 0;
  border-top: 1px solid #000;
  border-left: 1px solid #808080;
}
.caption {
  display: flex;
  align-items: center;
  gap: 2px;
  height: 17px;
  flex-shrink: 0;
  margin-right: 2px;
  padding: 0 3px 1px 2px;
  background: #808080;
  border: 1px solid #d4d0c8;
  border-right: 0;
  border-left-color: #000;
  border-bottom: 1px solid #000;
  box-shadow: inset 0 -1px #d4d0c8;
}
.caption__box {
  width: 10px;
  height: 10px;
  background: #fff;
  border: 1px solid #000;
}
.caption__name {
  margin: 0 auto 0 0;
  color: #d4d0c8;
  font-size: 11px;
  line-height: 14px;
}
.caption__value {
  color: #f00;
}
.caption__btn {
  display: flex;
  align-items: center;
  justify-content: center;
  width: 10px;
  height: 11px;
  background: #d4d0c8;
  border: 1px solid;
  border-color: #fff #404040 #404040 #fff;
}

/* chart pane: plot and price axis on top, dates below */
.pane {
  display: grid;
  grid-template: 1fr 32px / 1fr 51px;
  flex: 1;
  min-height: 0;
  margin-right: 2px;
  border-left: 1px solid #000;
}
.plot {
  width: 100%;
  height: 100%;
  min-height: 0;
  background: #fff;
}
.plot * {
  fill: none;
  vector-effect: non-scaling-stroke;
}
.plot__grid {
  stroke: #a8b4a8;
  stroke-dasharray: 3 3;
}
.plot__zero {
  stroke: #0000d0;
}
.plot__mark {
  stroke: #00f;
}
.plot__signal {
  stroke: #f00;
  stroke-dasharray: 3 4;
}
.plot__macd {
  stroke: #f00;
  stroke-width: 3;
  stroke-linejoin: round;
}
.yaxis {
  display: flex;
  min-height: 0;
  background: #fff;
  border-left: 1px solid #000;
}
.yaxis__ticks {
  width: 9px;
  height: 100%;
}
.yaxis__minor {
  stroke: #000;
  stroke-width: 3;
  stroke-dasharray: 1 5.240;
}
.yaxis__major {
  stroke: #000;
  stroke-width: 8;
  stroke-dasharray: 1 30.200;
}
.yaxis__labels {
  display: flex;
  flex: 1;
  flex-direction: column;
  justify-content: space-between;
  margin: 0;
  padding: 29px 4px 6px 0;
  list-style: none;
  text-align: right;
}
.dates {
  min-width: 0;
  background: #fff;
  border-top: 1px solid #000;
}
.weeks,
.months {
  display: grid;
  height: 16px;
  line-height: 16px;
}
.weeks {
  grid-template-columns: 25fr 29fr 29fr 23fr 29fr 29fr 23fr 29fr 29fr 29fr 29fr 30fr 23fr 29fr 23fr repeat(8, 29fr) 23fr 29fr 18fr 11fr 29fr 24fr repeat(7, 29fr) 23fr 29fr 23fr 24fr repeat(11, 29fr) 23fr 23fr 6fr 29fr 29fr 10fr;
  border-bottom: 1px solid #000;
}
.months {
  height: 15px;
  grid-template-columns: 106fr 110fr 122fr 128fr 122fr 122fr 122fr 122fr 122fr 116fr 121fr 128fr 74fr;
}
.weeks span,
.months span {
  min-width: 0;
  padding-left: 1px;
  overflow: hidden;
  border-left: 1px solid #000;
}
.weeks span:first-child,
.months span:first-child {
  border-left: 0;
}
.weeks .cut {
  text-indent: -3px;
}

/* scroll bar row */
.scroller {
  display: flex;
  align-items: center;
  height: 19px;
  flex-shrink: 0;
  margin-top: 1px;
  padding-right: 2px;
}
.scroller__btn {
  display: flex;
  align-items: center;
  justify-content: center;
  width: 16px;
  height: 18px;
  border: 1px solid;
  border-color: #fff #404040 #404040 #fff;
}
.scroller__track {
  display: flex;
  flex: 1;
  height: 18px;
  background: repeating-conic-gradient(#fff 0 25%, #d4d0c8 0 50%) 0 0 / 2px 2px;
}
.scroller__thumb {
  width: 51%;
  margin-left: auto;
  background: #d4d0c8;
  border: 1px solid;
  border-color: #fff #404040 #808080 #fff;
}
.mini {
  display: flex;
  align-items: center;
  justify-content: center;
  width: 17px;
  height: 18px;
}
.mini_text {
  font-family: "DejaVu Serif", serif;
}

/* bottom toolbar */
.toolbar_bottom {
  border-top: 0;
  border-bottom: 1px solid #808080;
}
.palette {
  display: grid;
  grid-template-columns: repeat(8, 10px);
  grid-auto-rows: 10px;
  margin-left: 10px;
}
.swatch {
  width: 9px;
  height: 9px;
  border: 1px solid #808080;
}
.swatch_black { background: #000; }
.swatch_blue { background: #00f; }
.swatch_cyan { background: #0ff; }
.swatch_lime { background: #0f0; }
.swatch_magenta { background: #f0f; }
.swatch_red { background: #f00; border-color: #fff; }
.swatch_yellow { background: #ff0; }
.swatch_white { background: #fff; }
.swatch_navy { background: #000080; }
.swatch_teal { background: #008080; }
.swatch_green { background: #008000; }
.swatch_purple { background: #800080; }
.swatch_maroon { background: #800000; }
.swatch_olive { background: #808000; }
.swatch_gray { background: #808080; }
.swatch_silver { background: #c0c0c0; }
.palette__more {
  padding: 4px 6px 4px 4px;
}
.symbol {
  width: 63px;
  height: 20px;
  margin-left: 8px;
  padding-left: 1px;
  border: 1px solid;
  border-color: #404040 #fff #fff #404040;
}
.trade {
  width: 66px;
  height: 23px;
  border: 1px solid;
  border-color: #fff #404040 #404040 #fff;
  color: #808080;
  text-shadow: 1px 1px #fff;
}

/* status bar */
.status {
  display: flex;
  align-items: center;
  gap: 3px;
  height: 20px;
  flex-shrink: 0;
  border-top: 1px solid #fff;
}
.status__help {
  margin: 0 auto 0 1px;
}
.status__pane {
  height: 16px;
  padding-left: 1px;
  border: 1px solid;
  border-color: #808080 #fff #fff #808080;
}
.status__pane_a { width: 65px; }
.status__pane_b { width: 55px; }
.status__pane_c { width: 69px; }
.status__pane_d { width: 23px; }
.status__pane_time { width: 39px; }
.status__pane_dollar {
  width: 21px;
  color: #008000;
  font-size: 14px;
  font-weight: bold;
  text-align: center;
}
.status__pane_num { width: 28px; }

/* taskbar */
.taskbar {
  display: flex;
  align-items: center;
  height: 42px;
  flex-shrink: 0;
  padding: 0 3px 0 2px;
  border-top: 1px solid #fff;
}
.start {
  display: flex;
  align-items: center;
  gap: 2px;
  width: 54px;
  height: 38px;
  padding-left: 2px;
  border: 1px solid;
  border-color: #fff #404040 #404040 #fff;
  box-shadow: inset -1px -1px #808080;
  font-weight: bold;
}
.task {
  display: flex;
  align-items: center;
  justify-content: center;
  width: 48px;
  height: 38px;
  margin-right: 2px;
  border: 1px solid transparent;
}
.task svg,
.tray svg,
.start svg {
  shape-rendering: auto;
}
.task_first {
  margin-left: 9px;
}
.task_raised {
  border-color: #fff #404040 #404040 #fff;
  box-shadow: inset -1px -1px #808080;
}
.task_active {
  background: #fff;
  border-color: #404040 #fff #fff #404040;
  box-shadow: inset 1px 1px #808080;
}
.lang {
  margin-left: auto;
  margin-right: 5px;
}
.taskbar__split {
  width: 2px;
  height: 22px;
  margin-right: 3px;
  border-left: 1px solid #808080;
  border-right: 1px solid #fff;
}
.tray {
  display: flex;
  align-items: center;
  height: 38px;
  padding: 0 1px 0 5px;
  gap: 8px;
  border: 1px solid;
  border-color: #808080 #fff #fff #808080;
}
.clock {
  display: flex;
  flex-direction: column;
  width: 58px;
  margin-left: 4px;
  line-height: 16px;
  text-align: center;
}
```
